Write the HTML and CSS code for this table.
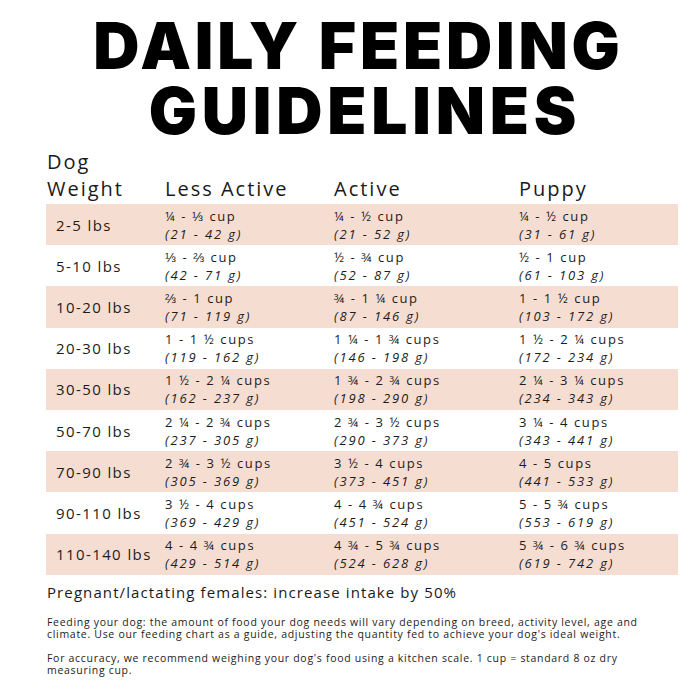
FILE: index.html
```html
<!DOCTYPE html>
<html>
<head>
<meta charset="utf-8">
<link rel="stylesheet" href="styles.css">
</head>
<body>
<div class="page">
  <h1 class="title"><span class="t1">DAILY FEEDING</span><span class="t2">GUIDELINES</span></h1>
  <div class="chart">
    <div class="head">
      <div class="hcell first">Dog<br>Weight</div>
      <div class="hcell">Less Active</div>
      <div class="hcell">Active</div>
      <div class="hcell">Puppy</div>
    </div>
    <div class="row pink"><div class="w">2-5 lbs</div><div class="c"><span>¼ - ⅓ cup</span><em>(21 - 42 g)</em></div><div class="c"><span>¼ - ½ cup</span><em>(21 - 52 g)</em></div><div class="c"><span>¼ - ½ cup</span><em>(31 - 61 g)</em></div></div>
    <div class="row"><div class="w">5-10 lbs</div><div class="c"><span>⅓ - ⅔ cup</span><em>(42 - 71 g)</em></div><div class="c"><span>½ - ¾ cup</span><em>(52 - 87 g)</em></div><div class="c"><span>½ - 1 cup</span><em>(61 - 103 g)</em></div></div>
    <div class="row pink"><div class="w">10-20 lbs</div><div class="c"><span>⅔ - 1 cup</span><em>(71 - 119 g)</em></div><div class="c"><span>¾ - 1 ¼ cup</span><em>(87 - 146 g)</em></div><div class="c"><span>1 - 1 ½ cup</span><em>(103 - 172 g)</em></div></div>
    <div class="row"><div class="w">20-30 lbs</div><div class="c"><span>1 - 1 ½ cups</span><em>(119 - 162 g)</em></div><div class="c"><span>1 ¼ - 1 ¾ cups</span><em>(146 - 198 g)</em></div><div class="c"><span>1 ½ - 2 ¼ cups</span><em>(172 - 234 g)</em></div></div>
    <div class="row pink"><div class="w">30-50 lbs</div><div class="c"><span>1 ½ - 2 ¼ cups</span><em>(162 - 237 g)</em></div><div class="c"><span>1 ¾ - 2 ¾ cups</span><em>(198 - 290 g)</em></div><div class="c"><span>2 ¼ - 3 ¼ cups</span><em>(234 - 343 g)</em></div></div>
    <div class="row"><div class="w">50-70 lbs</div><div class="c"><span>2 ¼ - 2 ¾ cups</span><em>(237 - 305 g)</em></div><div class="c"><span>2 ¾ - 3 ½ cups</span><em>(290 - 373 g)</em></div><div class="c"><span>3 ¼ - 4 cups</span><em>(343 - 441 g)</em></div></div>
    <div class="row pink"><div class="w">70-90 lbs</div><div class="c"><span>2 ¾ - 3 ½ cups</span><em>(305 - 369 g)</em></div><div class="c"><span>3 ½ - 4 cups</span><em>(373 - 451 g)</em></div><div class="c"><span>4 - 5 cups</span><em>(441 - 533 g)</em></div></div>
    <div class="row"><div class="w">90-110 lbs</div><div class="c"><span>3 ½ - 4 cups</span><em>(369 - 429 g)</em></div><div class="c"><span>4 - 4 ¾ cups</span><em>(451 - 524 g)</em></div><div class="c"><span>5 - 5 ¾ cups</span><em>(553 - 619 g)</em></div></div>
    <div class="row pink"><div class="w">110-140 lbs</div><div class="c"><span>4 - 4 ¾ cups</span><em>(429 - 514 g)</em></div><div class="c"><span>4 ¾ - 5 ¾ cups</span><em>(524 - 628 g)</em></div><div class="c"><span>5 ¾ - 6 ¾ cups</span><em>(619 - 742 g)</em></div></div>
  </div>
  <p class="note">Pregnant/lactating females: increase intake by 50%</p>
  <p class="small first">Feeding your dog: the amount of food your dog needs will vary depending on breed, activity level, age and climate. Use our feeding chart as a guide, adjusting the quantity fed to achieve your dog's ideal weight.</p>
  <p class="small">For accuracy, we recommend weighing your dog's food using a kitchen scale. 1 cup = standard 8 oz dry measuring cup.</p>
</div>
</body>
</html>
```
FILE: styles.css
```css
html, body {
  margin: 0;
  padding: 0;
  background: #ffffff;
}
.page {
  width: 700px;
  height: 700px;
  color: #111111;
  font-family: "Open Sans", "Liberation Sans", sans-serif;
}
.title {
  margin: 0;
  padding-top: 13px;
  display: flex;
  flex-direction: column;
  align-items: center;
  font-family: Inter, "Liberation Sans", sans-serif;
  font-weight: 900;
  font-size: 64px;
  line-height: 65px;
  color: #000000;
}
.t1 {
  letter-spacing: 3.8px;
  margin-right: -3.8px;
  margin-left: 13px;
}
.t2 {
  letter-spacing: 4.8px;
  margin-right: -4.8px;
  margin-left: 25px;
}
.chart {
  margin: 5px 0 0 46px;
  width: 632px;
}
.head, .row {
  display: grid;
  grid-template-columns: 119px 169px 185px 159px;
}
.head {
  font-size: 20px;
  line-height: 27px;
  letter-spacing: 2px;
  color: #1a1a1a;
  padding-bottom: 2px;
}
.hcell {
  align-self: end;
}
.hcell.first {
  padding-left: 1px;
}
.row {
  height: 41.2px;
  align-items: center;
}
.row.pink {
  background: #f6ddd2;
}
.w {
  padding-left: 10px;
  font-size: 15px;
  letter-spacing: 1.4px;
  color: #1c1c1c;
}
.c {
  display: flex;
  flex-direction: column;
  font-size: 13px;
  line-height: 18px;
  letter-spacing: 1.6px;
  color: #1c1c1c;
}
.c em {
  font-style: italic;
  letter-spacing: 1.85px;
}
.note {
  margin: 7px 0 0 47px;
  font-size: 15px;
  letter-spacing: 1.1px;
  color: #1a1a1a;
}
.small {
  margin: 11px 0 0 47px;
  width: 618px;
  font-size: 10.5px;
  line-height: 12.5px;
  letter-spacing: 0.7px;
  color: #222222;
}
.small.first {
  margin-top: 14px;
}
```
